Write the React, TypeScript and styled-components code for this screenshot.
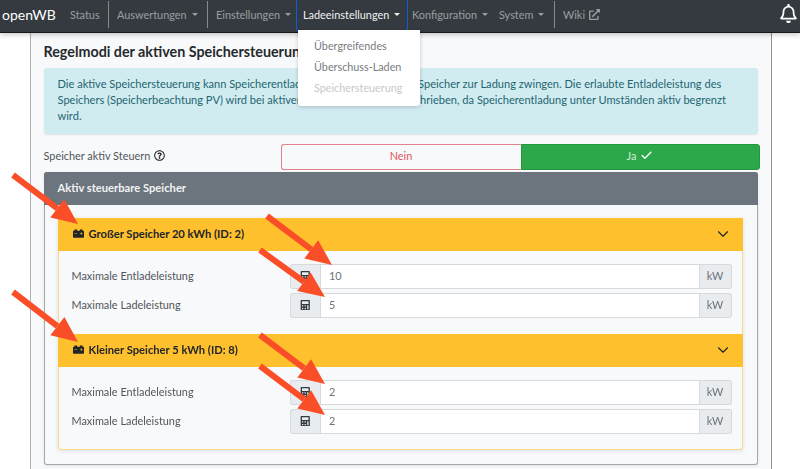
import React from "react";
import styled, { createGlobalStyle } from "styled-components";
import { FaRegBell, FaCalculator, FaCarBattery, FaRegQuestionCircle, FaExternalLinkAlt } from "react-icons/fa";
import { ChevronDown, Check } from "lucide-react";

const Global = createGlobalStyle`
  html, body { margin: 0; padding: 0; background: #fff; height: 469px; overflow: hidden; }
  body { font-family: Lato, "Noto Sans", sans-serif; font-size: 10.9px; color: #343a40; }
  * { box-sizing: border-box; }
`;

const Page = styled.div`
  position: relative;
  width: 800px;
  height: 469px;
  overflow: hidden;
`;

const Navbar = styled.nav`
  position: relative;
  z-index: 2;
  display: flex;
  align-items: center;
  height: 33px;
  background: #343a40;
  border-bottom: 1px solid #16181b;
  box-shadow: 0 2px 5px rgba(0, 0, 0, 0.2);
  padding: 0 0 4px 2px;
`;

const Brand = styled.span`
  color: #fff;
  font-size: 14px;
  width: 60px;
`;

const NavItem = styled.span<{ $active?: boolean; $tight?: boolean; $w: number }>`
  display: flex;
  align-items: center;
  align-self: ${(p) => (p.$active ? "flex-start" : "center")};
  height: ${(p) => (p.$active ? "31px" : "auto")};
  width: ${(p) => p.$w}px;
  padding-left: ${(p) => (p.$active ? "6px" : p.$tight ? "4px" : "8px")};
  padding-bottom: ${(p) => (p.$active ? "2px" : "0")};
  color: ${(p) => (p.$active ? "#f0f1f2" : "rgba(255,255,255,0.5)")};
  font-size: 10.9px;
  white-space: nowrap;
  border: ${(p) => (p.$active ? "1.5px solid #0d5fd8" : "none")};
  border-top: none;
  border-radius: ${(p) => (p.$active ? "0 0 3px 3px" : "0")};
`;

const Caret = styled.i`
  display: inline-block;
  margin-left: 5px;
  width: 0;
  height: 0;
  border-left: 3.5px solid transparent;
  border-right: 3.5px solid transparent;
  border-top: 3.5px solid currentColor;
`;

const NavDivider = styled.span`
  width: 1px;
  height: 27px;
  background: #868b90;
`;

const ExternalIcon = styled(FaExternalLinkAlt)`
  margin-left: 4px;
  font-size: 11px;
`;

const Bell = styled(FaRegBell)`
  position: absolute;
  left: 779px;
  top: 4px;
  color: #fff;
  font-size: 19px;
`;

const Menu = styled.div`
  position: absolute;
  z-index: 3;
  left: 298px;
  top: 30px;
  width: 122px;
  height: 75.5px;
  background: #fff;
  border-radius: 0 0 3px 3px;
  box-shadow: 0 1px 4px rgba(0, 0, 0, 0.2);
  padding-top: 4.5px;
`;

const MenuItem = styled.div<{ $disabled?: boolean }>`
  height: 21px;
  line-height: 21px;
  padding-left: 16px;
  font-size: 10.8px;
  white-space: nowrap;
  color: ${(p) => (p.$disabled ? "#c6c9cc" : "#777c81")};
`;

const OuterCard = styled.main`
  width: 742px;
  height: 460px;
  margin-left: 29.5px;
  margin-top: -4px;
  padding: 13px 13px 0 13px;
  background: #f8f9fa;
  border-left: 1.5px solid #aeb0b3;
  border-right: 1px solid #8f9295;
`;

const Title = styled.h2`
  margin: 0;
  height: 20px;
  line-height: 20px;
  font-size: 14.3px;
  font-weight: 700;
  color: #26292c;
  white-space: nowrap;
`;

const Alert = styled.div`
  width: 714px;
  height: 66px;
  margin-top: 5.5px;
  padding: 8px 14px 0 14px;
  background: #d1ecf1;
  border-radius: 3px;
  box-shadow: 0 1px 2px rgba(0, 0, 0, 0.1);
  color: #236570;
  font-size: 11.08px;
  line-height: 16px;
`;

const ToggleRow = styled.div`
  display: flex;
  align-items: center;
  width: 716px;
  height: 26px;
  margin-top: 10px;
`;

const ToggleLabel = styled.span`
  display: flex;
  align-items: center;
  gap: 4px;
  width: 237px;
  padding-bottom: 1.5px;
  color: #51565b;
  font-size: 10.9px;
`;

const HelpIcon = styled(FaRegQuestionCircle)`
  font-size: 11px;
  color: #212529;
`;

const NoButton = styled.div`
  display: flex;
  align-items: center;
  justify-content: center;
  width: 240px;
  height: 26px;
  padding-bottom: 1.5px;
  border: 1px solid #e2828c;
  border-right: none;
  border-radius: 3px 0 0 3px;
  color: #e0535f;
  font-size: 10.9px;
`;

const YesButton = styled.div`
  display: flex;
  align-items: center;
  justify-content: center;
  gap: 4px;
  width: 239px;
  height: 26px;
  padding-bottom: 1.5px;
  background: #2ca84a;
  border: 1px solid #23963e;
  border-radius: 0 3px 3px 0;
  color: #d3ecd9;
  font-size: 10.9px;
`;

const CheckIcon = styled(Check)`
  color: #fff;
`;

const ListCard = styled.section`
  width: 714px;
  height: 293px;
  margin-top: 2.5px;
  background: #f8f9fa;
  border: 1px solid #a5a8ab;
  border-top: none;
  border-radius: 3px;
  box-shadow: 0 1px 3px rgba(0, 0, 0, 0.1);
`;

const ListHeader = styled.header`
  display: flex;
  align-items: center;
  height: 32.5px;
  margin: 0 -1px;
  padding: 0 0 1.5px 14px;
  background: #6c757d;
  border-radius: 3px 3px 0 0;
  color: #f2f3f4;
  font-size: 11.2px;
  font-weight: 700;
`;

const Accordion = styled.div`
  display: flex;
  flex-direction: column;
  padding: 13.5px 13px 0;
  filter: drop-shadow(0 1px 2px rgba(0, 0, 0, 0.1));
`;

const StorageCard = styled.article`
  width: 685px;
  height: 116px;
  background: #f8f9fa;
  border-left: 1px solid #fcd98a;
  border-right: 1px solid #fcd98a;
  &:last-child {
    border-bottom: 1px solid #fcd98a;
    border-radius: 0 0 3px 3px;
  }
`;

const StorageHeader = styled.header`
  display: flex;
  align-items: center;
  height: 32.5px;
  margin: 0 -1px;
  padding: 0 11px 0 15px;
  background: #ffc02d;
  color: #212529;
  font-size: 11.2px;
  font-weight: 700;
`;

const StorageName = styled.span`
  margin-bottom: 1.5px;
`;

const BatteryIcon = styled(FaCarBattery)`
  font-size: 11px;
  margin-right: 5px;
  margin-bottom: 1.5px;
`;

const Chevron = styled(ChevronDown)`
  margin-left: auto;
  color: #212529;
`;

const StorageBody = styled.div`
  display: flex;
  flex-direction: column;
  gap: 3.5px;
  padding: 13.5px 10px 0 13px;
`;

const FieldRow = styled.div`
  display: flex;
  align-items: center;
  height: 25px;
`;

const FieldLabel = styled.span`
  width: 218px;
  padding-bottom: 2px;
  color: #51565b;
  font-size: 10.9px;
`;

const FieldGroup = styled.div`
  display: flex;
  flex: 1;
  height: 25px;
`;

const CalcAddon = styled.span`
  display: flex;
  align-items: center;
  justify-content: center;
  width: 30.5px;
  background: #e9ecef;
  border: 1px solid #d6dade;
  border-right: none;
  border-radius: 3px 0 0 3px;
  color: #343a40;
  font-size: 10.5px;
`;

const ValueBox = styled.span`
  display: flex;
  align-items: center;
  flex: 1;
  padding: 0 0 1.5px 8px;
  background: #fff;
  border: 1px solid #d6dade;
  color: #6b7278;
  font-size: 10.9px;
`;

const UnitAddon = styled.span`
  display: flex;
  align-items: center;
  justify-content: center;
  width: 32px;
  padding-bottom: 1.5px;
  background: #e9ecef;
  border: 1px solid #d6dade;
  border-left: none;
  border-radius: 0 3px 3px 0;
  color: #6b7278;
  font-size: 10.9px;
`;

const ArrowLayer = styled.svg`
  position: absolute;
  z-index: 4;
  left: 0;
  top: 0;
  pointer-events: none;
`;

const arrows: [number, number, number, number][] = [
  [13, 175, 78, 224],
  [267, 216, 332, 265],
  [260, 250, 325, 297],
  [13, 292, 78, 342],
  [260, 335, 325, 384],
  [260, 366, 325, 415],
];

function Arrow({ a }: { a: [number, number, number, number] }) {
  const [x1, y1, x2, y2] = a;
  const dx = x2 - x1;
  const dy = y2 - y1;
  const len = Math.hypot(dx, dy);
  const ux = dx / len;
  const uy = dy / len;
  const bx = x2 - ux * 26;
  const by = y2 - uy * 26;
  const px = -uy;
  const py = ux;
  const head = `${x2},${y2} ${bx + px * 11.5},${by + py * 11.5} ${bx - px * 11.5},${by - py * 11.5}`;
  return (
    <g>
      <line x1={x1} y1={y1} x2={bx} y2={by} stroke="#f94e27" strokeWidth={6} />
      <polygon points={head} fill="#f94e27" />
    </g>
  );
}

function Field({ label, value }: { label: string; value: string }) {
  return (
    <FieldRow>
      <FieldLabel>{label}</FieldLabel>
      <FieldGroup>
        <CalcAddon>
          <FaCalculator />
        </CalcAddon>
        <ValueBox>{value}</ValueBox>
        <UnitAddon>kW</UnitAddon>
      </FieldGroup>
    </FieldRow>
  );
}

function Storage({ name, a, b }: { name: string; a: string; b: string }) {
  return (
    <StorageCard>
      <StorageHeader>
        <BatteryIcon />
        <StorageName>{name}</StorageName>
        <Chevron size={18} strokeWidth={1.5} />
      </StorageHeader>
      <StorageBody>
        <Field label="Maximale Entladeleistung" value={a} />
        <Field label="Maximale Ladeleistung" value={b} />
      </StorageBody>
    </StorageCard>
  );
}

export default function App() {
  return (
    <Page>
      <Global />
      <Navbar>
        <Brand>openWB</Brand>
        <NavItem $w={46}>Status</NavItem>
        <NavDivider />
        <NavItem $w={98}>
          Auswertungen
          <Caret />
        </NavItem>
        <NavDivider />
        <NavItem $w={88}>
          Einstellungen
          <Caret />
        </NavItem>
        <NavItem $active $w={112}>
          Ladeeinstellungen
          <Caret />
        </NavItem>
        <NavItem $tight $w={83}>
          Konfiguration
          <Caret />
        </NavItem>
        <NavItem $w={63}>
          System
          <Caret />
        </NavItem>
        <NavDivider />
        <NavItem $w={60}>
          Wiki
          <ExternalIcon />
        </NavItem>
        <Bell />
      </Navbar>
      <Menu>
        <MenuItem>Übergreifendes</MenuItem>
        <MenuItem>Überschuss-Laden</MenuItem>
        <MenuItem $disabled>Speichersteuerung</MenuItem>
      </Menu>
      <OuterCard>
        <Title>Regelmodi der aktiven Speichersteuerung</Title>
        <Alert>
          Die aktive Speichersteuerung kann Speicherentladung begrenzen und den Speicher zur Ladung zwingen. Die erlaubte Entladeleistung des Speichers (Speicherbeachtung PV) wird bei aktiver Steuerung nicht vorgeschrieben, da Speicherentladung unter Umständen aktiv begrenzt wird.
        </Alert>
        <ToggleRow>
          <ToggleLabel>
            Speicher aktiv Steuern
            <HelpIcon />
          </ToggleLabel>
          <NoButton>Nein</NoButton>
          <YesButton>
            Ja
            <CheckIcon size={13} strokeWidth={2.4} />
          </YesButton>
        </ToggleRow>
        <ListCard>
          <ListHeader>Aktiv steuerbare Speicher</ListHeader>
          <Accordion>
            <Storage name="Großer Speicher 20 kWh (ID: 2)" a="10" b="5" />
            <Storage name="Kleiner Speicher 5 kWh (ID: 8)" a="2" b="2" />
          </Accordion>
        </ListCard>
      </OuterCard>
      <ArrowLayer width={800} height={469} viewBox="0 0 800 469">
        {arrows.map((a, i) => (
          <Arrow key={i} a={a} />
        ))}
      </ArrowLayer>
    </Page>
  );
}
